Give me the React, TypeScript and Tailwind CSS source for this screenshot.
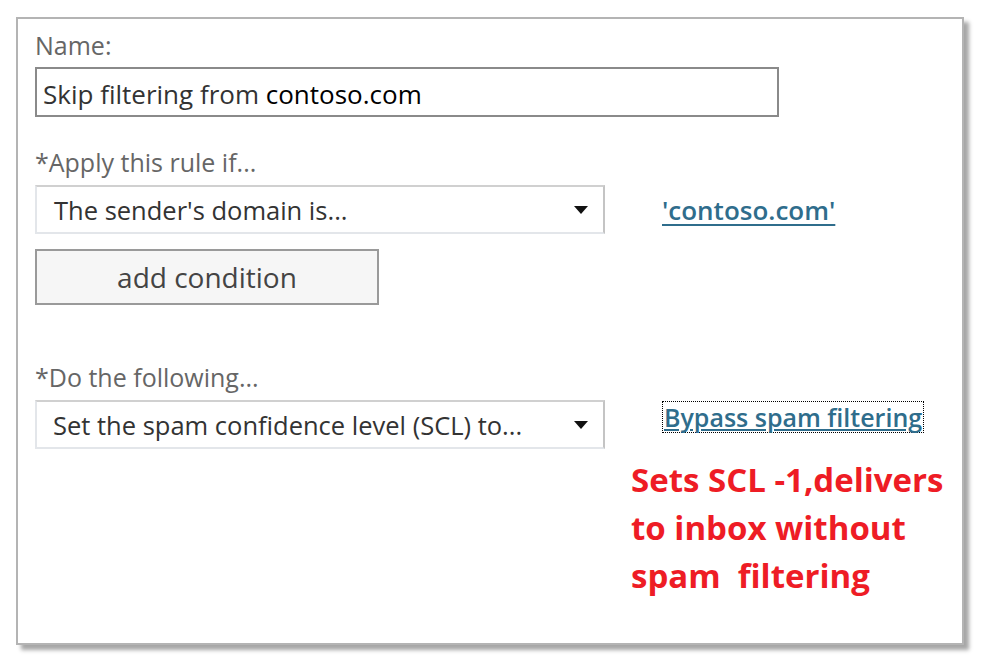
export default function App() {
  const font = { fontFamily: '"Open Sans", "Noto Sans", sans-serif' };

  return (
    <div className="w-[983px] h-[658px] bg-white pt-[17px] pl-[16px]" style={font}>
      <div className="w-[948px] h-[628px] border-2 border-[#b4b4b4] bg-white shadow-[5px_5px_4px_rgba(0,0,0,0.35)] pl-[17px] pt-[10px]">
        {/* Name */}
        <div className="text-[25px] leading-[32px] text-[#666]">Name:</div>
        <div className="mt-[6px] w-[744px] h-[50px] border-2 border-[#8a8a8a] flex items-center pl-[6px] pt-[3px] text-[26px] leading-[32px] text-[#333]">
          Skip filtering from&nbsp;<span className="text-black">contoso.com</span>
        </div>

        {/* Condition */}
        <div className="mt-[29px] text-[25px] leading-[32px] text-[#666]">*Apply this rule if...</div>
        <div className="mt-[7px] flex items-center">
          <div className="w-[570px] h-[49px] border-2 border-[#e3e6ea] border-r-[#c4c4c4] border-t-[#d0d0d0] flex items-center justify-between pl-[17px] pr-[14px] text-[25.5px] leading-[32px] text-[#333]">
            <span>The sender's domain is...</span>
            <Caret />
          </div>
          <a className="ml-[57px] text-[26px] leading-[32px] font-semibold text-[#2f6d8c] underline decoration-2 underline-offset-4">
            'contoso.com'
          </a>
        </div>
        <div className="mt-[15px] w-[344px] h-[56px] border-2 border-[#9a9a9a] bg-[#f6f6f6] flex items-center justify-center text-[28px] leading-[32px] text-[#444]">
          add condition
        </div>

        {/* Action */}
        <div className="mt-[56px] text-[25px] leading-[32px] text-[#666]">*Do the following...</div>
        <div className="mt-[7px] flex items-start">
          <div className="w-[570px] h-[49px] border-2 border-[#e3e6ea] border-r-[#c4c4c4] border-t-[#d0d0d0] flex items-center justify-between pl-[16px] pr-[14px] text-[25.5px] leading-[32px] text-[#333]">
            <span>Set the spam confidence level (SCL) to...</span>
            <Caret />
          </div>
          <div className="ml-[26px] flex flex-col">
            <a className="ml-[31px] mt-[1px] border border-dotted border-black px-[1px] text-[25px] leading-[30px] font-semibold text-[#2f6d8c] underline underline-offset-2 w-fit">
              Bypass spam filtering
            </a>
            <div className="mt-[23px] text-[33px] leading-[48px] font-bold text-[#ee1c25]">
              Sets SCL -1,delivers
              <br />
              to inbox without
              <br />
              spam&nbsp; filtering
            </div>
          </div>
        </div>
      </div>
    </div>
  );
}

function Caret() {
  return (
    <svg width="16" height="10" viewBox="0 0 16 10">
      <path d="M1 1h14L8 9z" fill="#111" />
    </svg>
  );
}
